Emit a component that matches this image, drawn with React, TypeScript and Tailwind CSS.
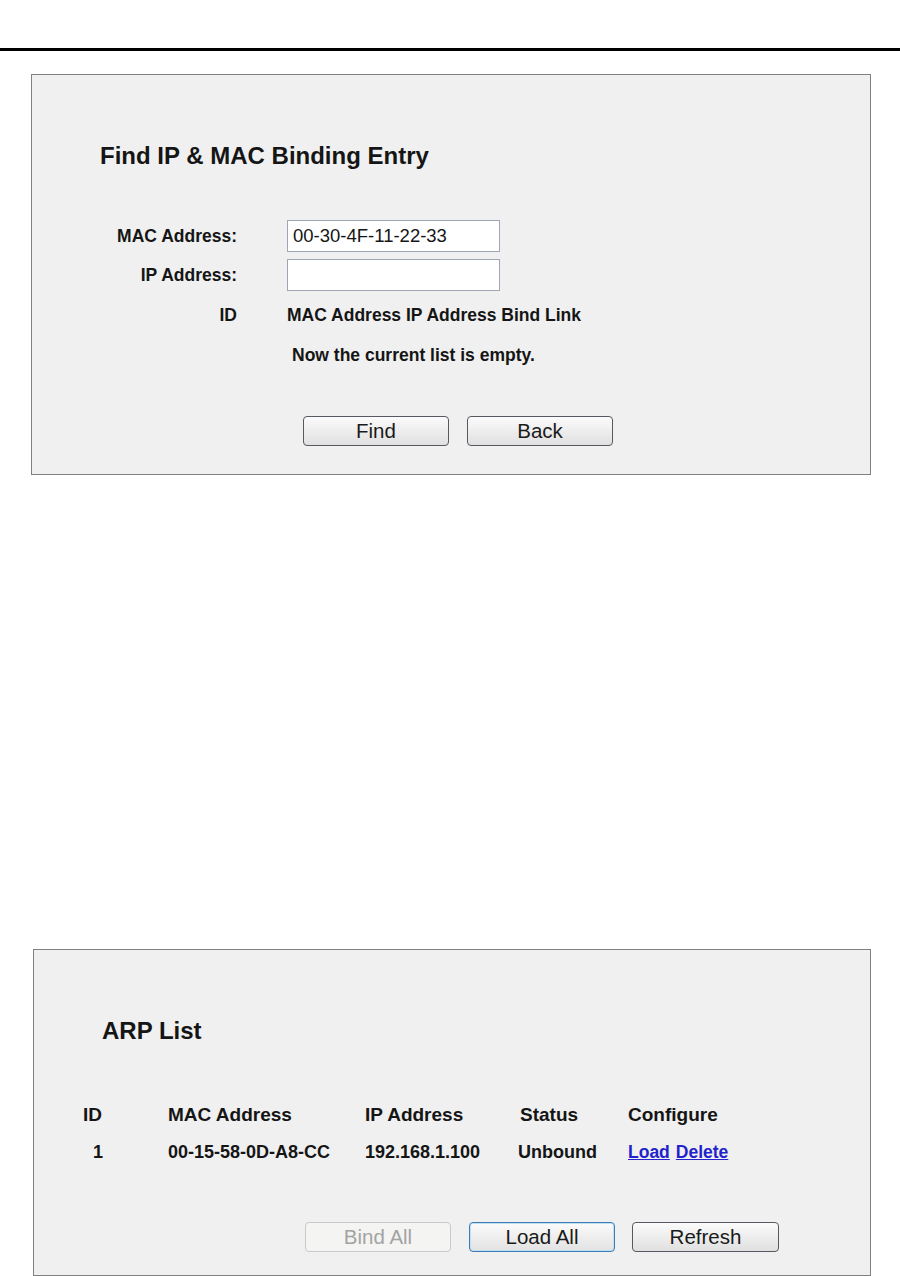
import React from "react";

function Btn({ label, variant = "normal", className = "" }: { label: string; variant?: "normal" | "focus" | "disabled"; className?: string }) {
  const base = "h-[30px] w-[146px] rounded-[4px] border flex items-center justify-center text-[20.5px] leading-none";
  const v =
    variant === "disabled"
      ? "border-[#c9c9c9] bg-[#f4f4f2] text-[#a3a3a3]"
      : variant === "focus"
      ? "border-[#3d7bb0] bg-gradient-to-b from-[#fbfbfb] to-[#e2e2e2] text-[#1a1a1a] shadow-[inset_0_0_0_1px_#bfe0f5]"
      : "border-[#555a60] bg-gradient-to-b from-[#fbfbfb] to-[#e0e0e0] text-[#1a1a1a]";
  return <div className={`${base} ${v} ${className}`}>{label}</div>;
}

export default function App() {
  return (
    <div
      className="w-[900px] h-[1276px] bg-white overflow-hidden text-[#151515]"
      style={{ fontFamily: '"Liberation Sans", Arial, sans-serif' }}
    >
      <div className="pt-[48px]">
        <div className="h-[3px] bg-black" />
      </div>

      {/* Panel 1 */}
      <div className="mt-[23px] ml-[31px] w-[840px] h-[401px] border border-[#808080] bg-[#f0f0f0] flex flex-col">
        <div className="pt-[67px] pl-[68px] text-[24px] leading-[28px] font-bold">Find IP &amp; MAC Binding Entry</div>

        <div className="mt-[50px] flex flex-col gap-[7px]">
          <div className="flex items-center h-[32px]">
            <div className="w-[205px] text-right text-[17.5px] font-bold">MAC Address:</div>
            <div className="ml-[50px] w-[213px] h-[32px] border border-[#9ea6b3] bg-white flex items-center pl-[5px] text-[18.5px]">
              00-30-4F-11-22-33
            </div>
          </div>
          <div className="flex items-center h-[32px]">
            <div className="w-[205px] text-right text-[17.5px] font-bold">IP Address:</div>
            <div className="ml-[50px] w-[213px] h-[32px] border border-[#9ea6b3] bg-white" />
          </div>
        </div>

        <div className="mt-[12px] flex items-center h-[24px]">
          <div className="w-[205px] text-right text-[17.5px] font-bold">ID</div>
          <div className="ml-[50px] text-[17.5px] font-bold">MAC Address IP Address Bind Link</div>
        </div>

        <div className="mt-[16px] flex items-center h-[24px]">
          <div className="ml-[260px] text-[17.5px] font-bold">Now the current list is empty.</div>
        </div>

        <div className="mt-[49px] flex pl-[271px] gap-[18px]">
          <Btn label="Find" />
          <Btn label="Back" />
        </div>
      </div>

      {/* Panel 2 */}
      <div className="mt-[474px] ml-[33px] w-[838px] h-[327px] border border-[#808080] bg-[#f0f0f0] flex flex-col">
        <div className="pt-[67px] pl-[68px] text-[24px] leading-[28px] font-bold">ARP List</div>

        <div className="mt-[58px] pl-[49px] flex items-center h-[24px] text-[19px] font-bold">
          <div className="w-[85px]">ID</div>
          <div className="w-[197px]">MAC Address</div>
          <div className="w-[155px]">IP Address</div>
          <div className="w-[108px]">Status</div>
          <div>Configure</div>
        </div>

        <div className="mt-[13px] pl-[49px] flex items-center h-[24px] text-[18px] font-bold">
          <div className="w-[85px] pl-[10px]">1</div>
          <div className="w-[197px]">00-15-58-0D-A8-CC</div>
          <div className="w-[155px]">192.168.1.100</div>
          <div className="w-[108px] -ml-[2px]">Unbound</div>
          <div className="flex gap-[6px] text-[17.5px] text-[#2323cc] ml-[2px]">
            <span className="underline">Load</span>
            <span className="underline">Delete</span>
          </div>
        </div>

        <div className="mt-[58px] flex pl-[271px]">
          <Btn label="Bind All" variant="disabled" />
          <Btn label="Load All" variant="focus" className="ml-[18px]" />
          <Btn label="Refresh" className="ml-[17px] w-[147px]" />
        </div>
      </div>
    </div>
  );
}
